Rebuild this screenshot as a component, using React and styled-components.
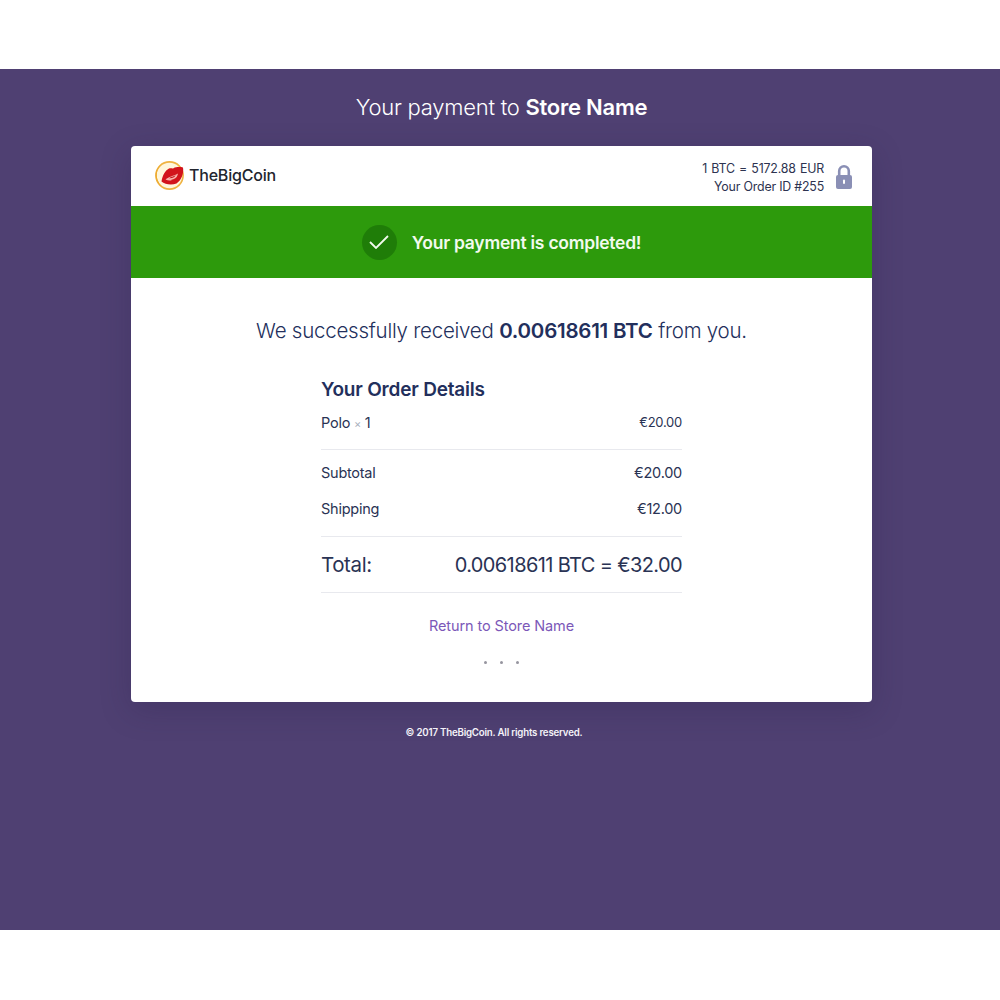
import React from "react";
import styled, { createGlobalStyle } from "styled-components";

const Global = createGlobalStyle`
  html, body { margin: 0; padding: 0; background: #fff; }
  body { font-family: Inter, "Liberation Sans", sans-serif; color: #232f5c; }
  * { box-sizing: border-box; }
`;

const Page = styled.div`
  margin-top: 69px;
  height: 861px;
  background: #4f4072;
  display: flex;
  flex-direction: column;
  align-items: center;
  padding: 24px 0 0 3px;
`;

const Heading = styled.h1`
  margin: 0 0 24px;
  height: 29px;
  line-height: 29px;
  font-size: 22px;
  font-weight: 300;
  letter-spacing: -0.25px;
  color: #fff;
  b { font-weight: 600; }
`;

const Card = styled.div`
  width: 741px;
  height: 556px;
  background: #fff;
  border-radius: 4px;
  overflow: hidden;
  box-shadow: 0 8px 30px rgba(40, 28, 70, 0.25);
`;

const Header = styled.header`
  height: 60px;
  display: flex;
  justify-content: space-between;
  align-items: center;
  padding: 0 19px 0 24px;
`;

const Brand = styled.div`
  display: flex;
  align-items: center;
  gap: 5px;
  margin-bottom: 2px;
  font-size: 16px;
  font-weight: 500;
  letter-spacing: -0.2px;
  color: #22252e;
`;

const Rate = styled.div`
  display: flex;
  align-items: center;
  gap: 11px;
`;

const RateText = styled.div`
  text-align: right;
  font-size: 12.4px;
  line-height: 18px;
  letter-spacing: -0.2px;
  color: #2d3350;
  margin-top: 4px;
`;

const RateLine = styled.div`
  word-spacing: ${p => p.$wordSpacing || 0}px;
`;

const Banner = styled.div`
  height: 72px;
  background: #2d9a0c;
  display: flex;
  justify-content: center;
  align-items: center;
  gap: 15px;
  color: #f2faee;
  font-size: 17.5px;
  font-weight: 600;
  letter-spacing: -0.25px;
`;

const CheckBadge = styled.span`
  width: 35px;
  height: 35px;
  border-radius: 50%;
  background: #1f7d08;
  display: flex;
  align-items: center;
  justify-content: center;
`;

const Received = styled.p`
  margin: 38px 0 0;
  height: 30px;
  line-height: 30px;
  text-align: center;
  font-size: 20.5px;
  font-weight: 300;
  letter-spacing: -0.24px;
  b { font-weight: 600; }
`;

const Details = styled.section`
  width: 361px;
  margin: 31px 0 0 190px;
`;

const DetailsTitle = styled.h2`
  margin: 0;
  height: 26px;
  line-height: 26px;
  font-size: 19px;
  font-weight: 600;
  letter-spacing: -0.2px;
`;

const Row = styled.div`
  display: flex;
  justify-content: space-between;
  align-items: center;
  height: 36px;
  font-size: 14.5px;
  letter-spacing: -0.25px;
  color: #2a3354;
`;

const ItemRow = styled(Row)`
  height: 46px;
  padding-bottom: 8px;
`;

const ItemPrice = styled.span`
  font-size: 13px;
  margin-top: -1px;
`;

const Multiply = styled.span`
  color: #aab0bd;
  font-size: 11px;
`;

const Rule = styled.hr`
  margin: ${p => p.$before || 0}px 0 ${p => p.$after || 0}px;
  border: 0;
  border-top: 1px solid #e8e9ee;
`;

const TotalRow = styled(Row)`
  height: 55px;
  font-size: 20.5px;
  letter-spacing: -0.4px;
`;

const TotalValue = styled.span`
  font-size: 20px;
  letter-spacing: -0.62px;
`;

const ReturnLink = styled.a`
  display: block;
  margin-top: 23px;
  height: 20px;
  line-height: 20px;
  text-align: center;
  font-size: 14.5px;
  letter-spacing: -0.1px;
  color: #7b58b8;
`;

const Dots = styled.div`
  display: flex;
  justify-content: center;
  gap: 13px;
  margin-top: 25px;
`;

const Dot = styled.span`
  width: 3px;
  height: 3px;
  border-radius: 50%;
  background: #96959f;
`;

const Footer = styled.footer`
  margin: 23px 15px 0 0;
  font-size: 9.7px;
  line-height: 16px;
  font-weight: 600;
  letter-spacing: -0.2px;
  color: #f4f2f8;
`;

const CoinLogo = () => (
  <svg width="29" height="29" viewBox="0 0 29 29">
    <circle cx="14.5" cy="14.5" r="13.6" fill="#fff6dc" stroke="#efb241" strokeWidth="1.6" />
    <path d="M6 3.6 A13.6 13.6 0 0 0 9 26.9 A15 15 0 0 1 6 3.6 Z" fill="#eda92a" />
    <path
      d="M6.5 20.5 C7.5 14.5 10 9.5 14 7.5 C15.8 6.6 17.5 7.8 18.5 7.2 C21 6 25 5.8 28 6.6 C29 12.5 26.5 19.5 21.5 22.4 C17 24.2 10 23.6 6.5 20.5 Z"
      fill="#d2141c"
    />
    <path d="M10.5 18.6 C14 15.2 18 15.2 23 12.4 C22.2 17 18.8 18.4 16.4 18.4 C18 19.4 13.8 20.2 10.5 18.6 Z" fill="#f7b3ac" />
    <path d="M14 17.3 C16 15.9 18.8 15.6 20.8 14.3 C19.6 16.6 16.8 17.6 14 17.3 Z" fill="#c3131b" />
  </svg>
);

const LockIcon = () => (
  <svg width="18" height="25" viewBox="0 0 18 25">
    <path d="M4.2 11 V7 a4.8 4.8 0 0 1 9.6 0 V11" fill="none" stroke="#8a8fb5" strokeWidth="2.6" />
    <rect x="1" y="11" width="16" height="14" rx="2" fill="#8a8fb5" />
    <rect x="8" y="15.5" width="2" height="4.5" rx="1" fill="#fff" />
  </svg>
);

const CheckIcon = () => (
  <svg width="20" height="14" viewBox="0 0 20 14">
    <path d="M1 7 L7 13 L19 1" fill="none" stroke="#f2faee" strokeWidth="1.8" />
  </svg>
);

export default function App() {
  return (
    <>
      <Global />
      <Page>
        <Heading>
          Your payment to <b>Store Name</b>
        </Heading>
        <Card>
          <Header>
            <Brand>
              <CoinLogo />
              TheBigCoin
            </Brand>
            <Rate>
              <RateText>
                <RateLine $wordSpacing={1}>1 BTC = 5172.88 EUR</RateLine>
                <RateLine>Your Order ID #255</RateLine>
              </RateText>
              <LockIcon />
            </Rate>
          </Header>
          <Banner>
            <CheckBadge>
              <CheckIcon />
            </CheckBadge>
            Your payment is completed!
          </Banner>
          <Received>
            We successfully received <b>0.00618611 BTC</b> from you.
          </Received>
          <Details>
            <DetailsTitle>Your Order Details</DetailsTitle>
            <ItemRow>
              <span>
                Polo <Multiply>×</Multiply> 1
              </span>
              <ItemPrice>€20.00</ItemPrice>
            </ItemRow>
            <Rule $after={4} />
            <Row>
              <span>Subtotal</span>
              <span>€20.00</span>
            </Row>
            <Row>
              <span>Shipping</span>
              <span>€12.00</span>
            </Row>
            <Rule $before={10} />
            <TotalRow>
              <span>Total:</span>
              <TotalValue>0.00618611 BTC = €32.00</TotalValue>
            </TotalRow>
            <Rule />
            <ReturnLink>Return to Store Name</ReturnLink>
            <Dots>
              <Dot />
              <Dot />
              <Dot />
            </Dots>
          </Details>
        </Card>
        <Footer>© 2017 TheBigCoin. All rights reserved.</Footer>
      </Page>
    </>
  );
}
